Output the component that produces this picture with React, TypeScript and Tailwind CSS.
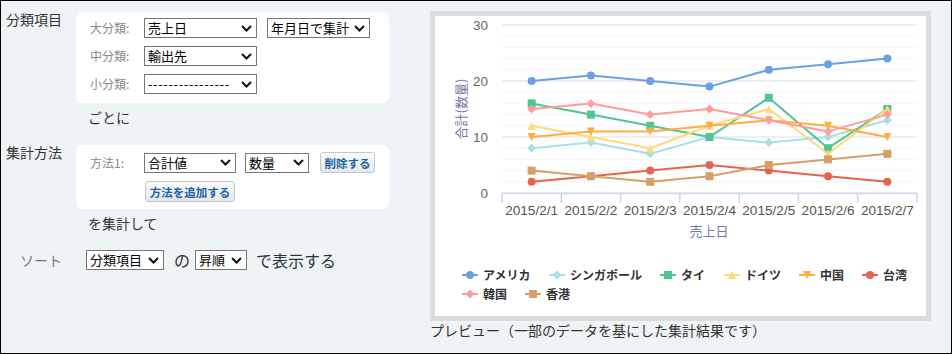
const font = { fontFamily: '"Noto Sans CJK JP", "Liberation Sans", sans-serif' };

type Marker = "circle" | "square" | "diamond" | "triangle" | "triangle-down";

interface Series {
	name: string;
	color: string;
	marker: Marker;
	data: number[];
}

const series: Series[] = [
	{ name: "アメリカ", color: "#6ba1e4", marker: "circle", data: [20, 21, 20, 19, 22, 23, 24] },
	{ name: "シンガポール", color: "#a8dfe9", marker: "diamond", data: [8, 9, 7, 10, 9, 10, 13] },
	{ name: "タイ", color: "#4ec593", marker: "square", data: [16, 14, 12, 10, 17, 8, 15] },
	{ name: "ドイツ", color: "#ffd97b", marker: "triangle", data: [12, 10, 8, 12, 15, 7, 15] },
	{ name: "中国", color: "#ffac40", marker: "triangle-down", data: [10, 11, 11, 12, 13, 12, 10] },
	{ name: "台湾", color: "#e8634e", marker: "circle", data: [2, 3, 4, 5, 4, 3, 2] },
	{ name: "韓国", color: "#ff9c9c", marker: "diamond", data: [15, 16, 14, 15, 13, 11, 14] },
	{ name: "香港", color: "#d4a06a", marker: "square", data: [4, 3, 2, 3, 5, 6, 7] },
];

const categories = ["2015/2/1", "2015/2/2", "2015/2/3", "2015/2/4", "2015/2/5", "2015/2/6", "2015/2/7"];

// legend positions (symbol x, row y)
const legendPos = [
	[462, 275],
	[549, 275],
	[660, 275],
	[724, 275],
	[799, 275],
	[862, 275],
	[462, 294],
	[525, 294],
];

const plotLeft = 502;
const plotRight = 917;
const step = (plotRight - plotLeft) / 7;
const xPos = (i: number) => plotLeft + step * (i + 0.5);
const yPos = (v: number) => 193 - v * 5.6;

function MarkerShape({ type, x, y, color }: { type: Marker; x: number; y: number; color: string }) {
	if (type === "circle") return <circle cx={x} cy={y} r={4} fill={color} />;
	if (type === "square") return <rect x={x - 4} y={y - 4} width={8} height={8} fill={color} />;
	if (type === "diamond")
		return <polygon points={`${x},${y - 4.5} ${x + 4.5},${y} ${x},${y + 4.5} ${x - 4.5},${y}`} fill={color} />;
	if (type === "triangle")
		return <polygon points={`${x},${y - 4} ${x + 4},${y + 4} ${x - 4},${y + 4}`} fill={color} />;
	return <polygon points={`${x - 4},${y - 4} ${x + 4},${y - 4} ${x},${y + 4}`} fill={color} />;
}

function Chart() {
	const grid = [];
	for (let v = 0; v <= 30; v += 2) grid.push(v);
	return (
		<svg width={491} height={299} viewBox="435 16 491 299">
			{grid.map((v) => (
				<line
					key={v}
					x1={plotLeft}
					x2={plotRight}
					y1={yPos(v)}
					y2={yPos(v)}
					stroke={v % 10 === 0 ? "#e6eaf0" : "#f3f5f8"}
					strokeWidth={v % 10 === 0 ? 1.5 : 1}
				/>
			))}
			{[0, 10, 20, 30].map((v) => (
				<text
					key={v}
					x={488}
					y={yPos(v) + 5}
					textAnchor="end"
					fontSize={13.5}
					fill="#666"
					fontFamily='"Liberation Sans", sans-serif'
				>
					{v}
				</text>
			))}
			<line x1={plotLeft} x2={plotRight} y1={193.5} y2={193.5} stroke="#ccd6eb" strokeWidth={1.5} />
			{Array.from({ length: 8 }).map((_, k) => (
				<line
					key={k}
					x1={plotLeft + step * k}
					x2={plotLeft + step * k}
					y1={193}
					y2={203}
					stroke="#ccd6eb"
					strokeWidth={1.5}
				/>
			))}
			{categories.map((c, i) => (
				<text
					key={c}
					x={xPos(i)}
					y={215}
					textAnchor="middle"
					fontSize={13.6}
					fill="#555"
					fontFamily='"Liberation Sans", sans-serif'
				>
					{c}
				</text>
			))}
			<text x={709} y={236} textAnchor="middle" fontSize={13} fill="#6f78a8" style={font}>
				売上日
			</text>
			<text
				x={0}
				y={0}
				transform="translate(466 109) rotate(-90)"
				textAnchor="middle"
				fontSize={13}
				fill="#7a74aa"
				style={font}
			>
				合計(数量)
			</text>
			{series.map((s) => (
				<g key={s.name}>
					<polyline
						points={s.data.map((v, i) => `${xPos(i)},${yPos(v)}`).join(" ")}
						fill="none"
						stroke={s.color}
						strokeWidth={2}
						strokeLinejoin="round"
					/>
					{s.data.map((v, i) => (
						<MarkerShape key={i} type={s.marker} x={xPos(i)} y={yPos(v)} color={s.color} />
					))}
				</g>
			))}
			{series.map((s, i) => {
				const [lx, ly] = legendPos[i];
				return (
					<g key={s.name}>
						<line x1={lx} x2={lx + 16} y1={ly} y2={ly} stroke={s.color} strokeWidth={2} />
						<MarkerShape type={s.marker} x={lx + 8} y={ly} color={s.color} />
						<text x={lx + 21} y={ly + 4.5} fontSize={12} fontWeight={700} fill="#333" style={font}>
							{s.name}
						</text>
					</g>
				);
			})}
		</svg>
	);
}

function Select({ value, className }: { value: string; className: string }) {
	return (
		<div
			className={`h-[20px] border border-[#767676] bg-white flex items-center justify-between pl-[3px] pr-[4px] text-[13px] text-black leading-[18px] ${className}`}
		>
			<span className="whitespace-nowrap">{value}</span>
			<svg width={11} height={7} viewBox="0 0 11 7" className="shrink-0 ml-[2px]">
				<polyline points="1,1 5.5,5.5 10,1" fill="none" stroke="#111" strokeWidth={2} />
			</svg>
		</div>
	);
}

function Button({ children, className }: { children: string; className: string }) {
	return (
		<div
			className={`h-[21px] border border-[#c4c8cc] rounded-[3px] bg-gradient-to-b from-[#fbfbfb] to-[#e4e6e8] flex items-center justify-center text-[11.5px] font-bold text-[#1d62a5] leading-[16px] whitespace-nowrap ${className}`}
		>
			{children}
		</div>
	);
}

export default function App() {
	return (
		<div
			className="w-[952px] h-[354px] border border-black bg-[#eef3f6] flex text-[#333]"
			style={font}
		>
			<div className="w-[429px] flex flex-col pt-[11px]">
				<div className="flex">
					<div className="w-[61px] text-right text-[14px] leading-[15px]">分類項目</div>
					<div className="ml-[14px] w-[313px] h-[91px] bg-white rounded-[6px] pl-[14px] pt-[6px] flex flex-col gap-[8px]">
						<div className="flex items-center">
							<div className="w-[54px] text-[12px] text-[#888]">大分類:</div>
							<Select value="売上日" className="w-[113px]" />
							<Select value="年月日で集計" className="w-[103px] ml-[10px]" />
						</div>
						<div className="flex items-center">
							<div className="w-[54px] text-[12px] text-[#888]">中分類:</div>
							<Select value="輸出先" className="w-[113px]" />
						</div>
						<div className="flex items-center">
							<div className="w-[54px] text-[12px] text-[#888]">小分類:</div>
							<Select value="----------------" className="w-[113px] tracking-[0.6px]" />
						</div>
					</div>
				</div>
				<div className="ml-[87px] mt-[4px] text-[14px] leading-[20px]">ごとに</div>
				<div className="flex mt-[18px]">
					<div className="w-[61px] text-right text-[14px] leading-[15px]">集計方法</div>
					<div className="ml-[14px] w-[313px] h-[64px] bg-white rounded-[6px] pl-[14px] pt-[7px] flex flex-col gap-[8px]">
						<div className="flex items-center h-[21px]">
							<div className="w-[54px] text-[12px] text-[#888]">方法1:</div>
							<Select value="合計値" className="w-[92px]" />
							<Select value="数量" className="w-[64px] ml-[9px]" />
							<Button className="w-[55px] ml-[11px]">削除する</Button>
						</div>
						<div className="flex">
							<Button className="w-[90px] ml-[55px]">方法を追加する</Button>
						</div>
					</div>
				</div>
				<div className="ml-[87px] mt-[4px] text-[14px] leading-[20px]">を集計して</div>
				<div className="flex items-center mt-[17px] h-[20px]">
					<div className="w-[61px] text-right text-[14px] text-[#777]">ソート</div>
					<Select value="分類項目" className="w-[78px] ml-[24px]" />
					<span className="ml-[10px] text-[16px]">の</span>
					<Select value="昇順" className="w-[52px] ml-[5px]" />
					<span className="ml-[9px] text-[16px]">で表示する</span>
				</div>
			</div>
			<div className="flex flex-col pt-[10px]">
				<div className="w-[501px] h-[310px] bg-[#dcdcdc] p-[5px]">
					<div className="w-full h-full bg-white">
						<Chart />
					</div>
				</div>
				<div className="text-[14px] leading-[18px] text-[#333]">
					プレビュー（一部のデータを基にした集計結果です）
				</div>
			</div>
		</div>
	);
}
